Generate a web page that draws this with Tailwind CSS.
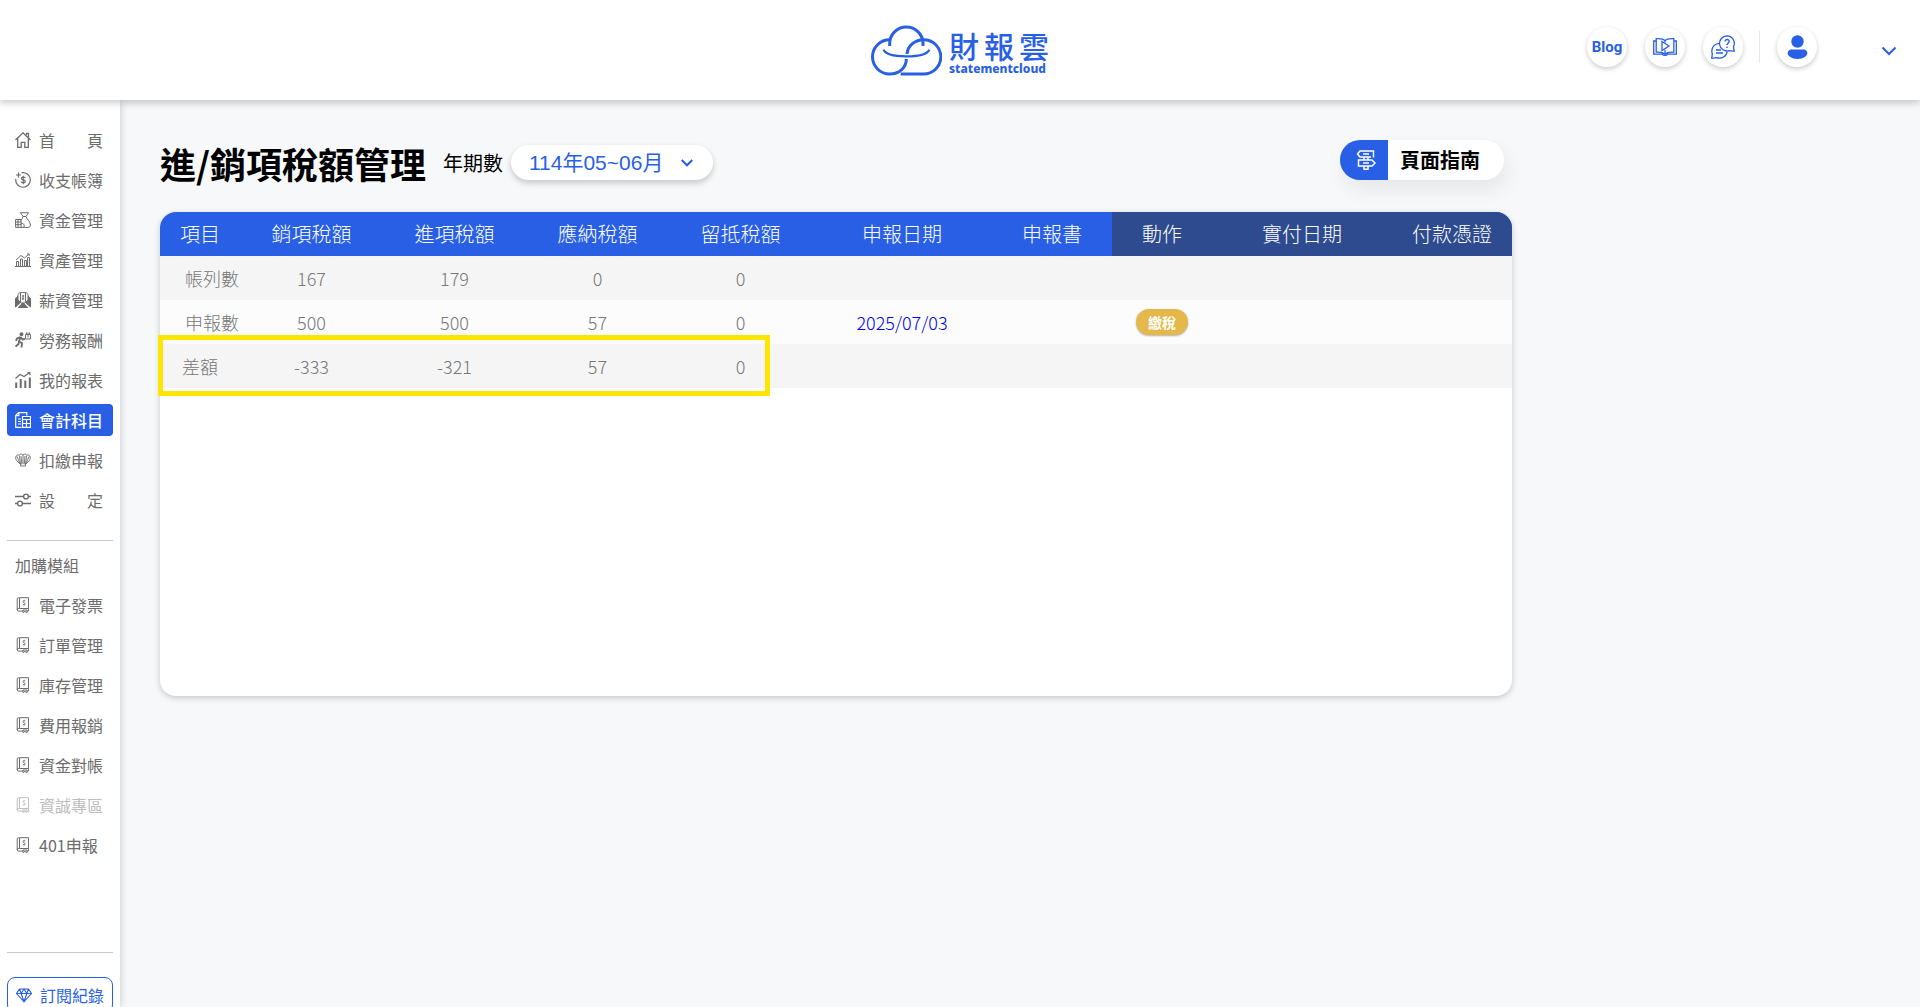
<!DOCTYPE html>
<html lang="zh-Hant">
<head>
    <meta charset="UTF-8">
    <meta name="viewport" content="width=device-width, initial-scale=1.0">
    <title>財報雲 - 進/銷項稅額管理</title>
    <script src="https://cdn.jsdelivr.net/npm/@tailwindcss/browser@4"></script>
</head>
<body class="h-screen overflow-hidden flex flex-col bg-[#f7f8fa] text-black font-['Noto_Sans_CJK_TC',sans-serif]">
    <!-- Icons used more than once -->
    <svg class="hidden">
        <symbol id="icon-book" viewBox="0 0 16 16" fill="none" stroke="currentColor">
            <path d="M4.500 .7h9v10.800h-9zM4.500 .7h-1a1.300 1.300 0 0 0-1.300 1.300v10.800a1.300 1.300 0 0 1 1.300-1.300h1M2.200 12.800a1.300 1.300 0 0 0 1.300 1.300h4.500M13.500 11.500v2.600h-1.500M8 13h4v2.500l-2-1-2 1z" />
            <path d="M10.200 4.200c-.5-.6-2.300-.6-2.300.5 0 1.200 2.400.8 2.400 2.100 0 1.100-1.900 1.100-2.500.4M9 3v1M9 7.600v1" stroke-width=".9" />
        </symbol>
    </svg>

    <!-- Header -->
    <header class="relative z-20 h-25 shrink-0 bg-white shadow-[0_2px_8px_rgba(0,0,0,0.25)] grid grid-cols-[1fr_auto_1fr] items-center">
        <div></div>
        <a href="#" class="flex items-center gap-[7px] text-[#285fe5]">
            <svg class="w-[71px] h-[51px]" viewBox="66 73 213 153" fill="none" stroke="currentColor" stroke-width="9">
                <path d="M122 136v-7a50 50 0 0 1 100 0v7" />
                <path d="M122 117a51 51 0 1 0 0 103c28 0 50-18 50-45" />
                <path d="M174 160c2-26 25-43 50-43a51 51 0 0 1 0 103h-69" />
                <path d="M104 147c5 15 35 20 68 20s62-5 69-20" stroke-width="7" />
            </svg>
            <span class="flex flex-col w-[100px] pt-[6px]">
                <span class="flex justify-between text-[30px] leading-8 font-medium"><span>財</span><span>報</span><span>雲</span></span>
                <span class="font-['Noto_Sans'] font-extrabold text-xs leading-4">statementcloud</span>
            </span>
        </a>
        <div class="flex items-center justify-end pr-[23px] pb-[6px] text-[#285fe5]">
            <a href="#" class="size-10 rounded-full bg-white shadow-[0_2px_5px_rgba(0,0,0,0.2)] flex items-center justify-center font-[Roboto] font-bold text-[15px]">Blog</a>
            <a href="#" aria-label="教學影片" class="ml-[18px] size-10 rounded-full bg-white shadow-[0_2px_5px_rgba(0,0,0,0.2)] flex items-center justify-center">
                <svg class="size-6" viewBox="0 0 24 24" fill="none" stroke="currentColor" stroke-width="1.300">
                    <path d="M12 5.500C10 3.700 7 3.300 3.200 3.700v13.500c3.800-.3 6.800.1 8.800 1.800 2-1.700 5-2.100 8.800-1.800V3.700C17 3.300 14 3.700 12 5.500zM3 6H.7v13.200h8.800c.5 1.500 4.500 1.500 5 0h8.800V6H21" />
                    <path d="M12 5.500v2M12 15v4" />
                    <path d="M9 6.500l7 4.500-7 4.500z" fill="white" />
                </svg>
            </a>
            <a href="#" aria-label="常見問題" class="ml-[18px] size-10 rounded-full bg-white shadow-[0_2px_5px_rgba(0,0,0,0.2)] flex items-center justify-center">
                <svg class="size-6" viewBox="0 0 24 24" fill="none" stroke="currentColor" stroke-width="1.300">
                    <path d="M8.500 8.300C4 8.500.8 11.800.8 16c0 1 .2 1.800.5 2.600L.8 23.300l5-.6c5 1.800 10-1.700 10.200-6" />
                    <path d="M16 .8a7.600 7.600 0 1 0 2.200 14.900l5 .6-.7-4.500A7.600 7.600 0 0 0 16 .8z" fill="white" />
                    <path d="M14 6.500c0-2.800 4.300-2.600 4.200 0 0 1.600-2.200 1.600-2.200 3.500M16 11.500v1.500M5 15h5M5 18h7" stroke-width="1.400" />
                </svg>
            </a>
            <span class="ml-4 w-px h-8 bg-gray-200"></span>
            <button type="button" aria-label="使用者" class="ml-[17px] size-10 rounded-full bg-white shadow-[0_2px_5px_rgba(0,0,0,0.2)] flex items-center justify-center">
                <svg class="size-6" viewBox="0 0 24 24" fill="currentColor">
                    <circle cx="12.500" cy="6.500" r="6.200" />
                    <path d="M5.500 14.500h14c6 2.500 2 9.500-7 9.500S-.5 17 5.500 14.500z" />
                </svg>
            </button>
            <button type="button" aria-label="展開選單" class="ml-16 mt-2">
                <svg class="size-4" viewBox="0 0 16 16" fill="none" stroke="currentColor" stroke-width="2"><path d="M1.500 4.500L8 11l6.500-6.500" /></svg>
            </button>
        </div>
    </header>

    <div class="flex flex-1 min-h-0">
        <!-- Sidebar -->
        <nav class="relative z-10 w-30 shrink-0 overflow-hidden bg-white shadow-[0_0_8px_rgba(0,0,0,0.2)] px-[7px] pt-6 text-base text-[#6c6c6c]">
            <ul class="flex flex-col gap-2">
                <li><a href="#" class="flex items-center h-8 px-2 gap-2">
                    <svg class="size-4 shrink-0" viewBox="0 0 16 16" fill="none" stroke="currentColor" stroke-width="1.300"><path d="M.5 8L8 .9 15.500 8M2.700 6.500v8.900h3.500v-5h3.600v5h3.500V6.500M11.500 3V1.300h2v4" /></svg>
                    <span class="flex flex-1 justify-between pr-[2px]"><span>首</span><span>頁</span></span></a></li>
                <li><a href="#" class="flex items-center h-8 px-2 gap-2">
                    <svg class="size-4 shrink-0" viewBox="0 0 16 16" fill="none" stroke="currentColor" stroke-width="1.200"><path d="M6.500 .8a7.300 7.300 0 1 1-5.700 6M3.500 .5v5M1 3h5M10.300 6c-.8-1.200-4-1.200-4 .6 0 1.700 4 1 4 2.800 0 1.900-3.400 1.800-4.300.4M8.200 3.700v8.600" /></svg>
                    <span class="whitespace-nowrap">收支帳簿</span></a></li>
                <li><a href="#" class="flex items-center h-8 px-2 gap-2">
                    <svg class="size-4 shrink-0" viewBox="0 0 16 16" fill="none" stroke="currentColor"><path d="M8 4.500L5.500 .7h8L11 4.500zM8 4.500C7.500 7 6 8 5.500 8.500M11 4.500c.5 2.500 4.400 4.500 4.400 8.500 0 1.500-.9 2.400-2.400 2.400H.6V7.500h5.500v8M.6 10h5.500M.6 12.700h5.500M3 7.500v8M6 11.500c3-1 4 2.500 2.500 4" /></svg>
                    <span class="whitespace-nowrap">資金管理</span></a></li>
                <li><a href="#" class="flex items-center h-8 px-2 gap-2">
                    <svg class="size-4 shrink-0" viewBox="0 0 16 16" fill="none" stroke="currentColor"><path d="M0 14.500h16M1.500 14V9.500h2V14M5.500 14V7h2v7M9.500 14V8.500h2V14M12.500 14V5.500h2V14M1 8l5-4.500L9.500 6 14 2M12 2h2.200v2" /></svg>
                    <span class="whitespace-nowrap">資產管理</span></a></li>
                <li><a href="#" class="flex items-center h-8 px-2 gap-2">
                    <svg class="size-4 shrink-0" viewBox="0 0 16 16" fill="currentColor"><path d="M0 6.500L3 3.500v4.500L6.500 10 .7 15.500 0 15zM16 6.500L13 3.500v4.500L9.500 10l5.800 5.500.7-.5zM7 11h2l4.500 5h-11z" /><path d="M3 8V3.500C3 2 4 .6 5.500 .6h5C12 .6 13 2 13 3.500V8l-3 3H6zM5.500 .6v9M10.500 .6v9M8 3v5M6.800 4h2.400M6.800 6.800h2.400" fill="none" stroke="currentColor" /></svg>
                    <span class="whitespace-nowrap">薪資管理</span></a></li>
                <li><a href="#" class="flex items-center h-8 px-2 gap-2">
                    <svg class="size-4 shrink-0" viewBox="0 0 16 16" fill="none" stroke="currentColor" stroke-width="1.300"><circle cx="6.500" cy="2.200" r="1.300" fill="currentColor" /><path d="M5.500 5L4 9.500l3 1.500-.5 4.500M4 9.500L3.500 12 .5 14.500M5.500 5L2 6.500 1 9M5.500 5L7.500 7.500 10 7" stroke-width="1.900" /><path d="M10.500 2.500h5v4.500h-5zM11.500 2.500V.5M14.500 2.500V.5M13 .5v5" stroke-width="1" /></svg>
                    <span class="whitespace-nowrap">勞務報酬</span></a></li>
                <li><a href="#" class="flex items-center h-8 px-2 gap-2">
                    <svg class="size-4 shrink-0" viewBox="0 0 16 16" fill="none" stroke="currentColor" stroke-width="1.200"><path d="M.5 6.500L5 2.500l4 2L14.500 .8M12.500 .7h2.400V3" /><path d="M1.200 16v-5.500M5.700 16V7M10.300 16V8.500M14.800 16V5.500" stroke-width="2" /></svg>
                    <span class="whitespace-nowrap">我的報表</span></a></li>
                <li><a href="#" aria-current="page" class="flex items-center h-8 px-2 gap-2 rounded bg-[#285fe5] text-white font-medium">
                    <svg class="size-4 shrink-0" viewBox="0 0 16 16" fill="none" stroke="currentColor" stroke-width="1.200"><path d="M6.500 15.300H.7V3.500L3.500 .7h8.300V3.500M3.800 .7v3H.7M3 7h3M3 9.500h3M3 12h3" /><path d="M7.500 4.500h8v10.800h-8zM7.500 7.500h8M11.500 7.500v7.800M7.500 11.500h8" /></svg>
                    <span class="whitespace-nowrap">會計科目</span></a></li>
                <li><a href="#" class="flex items-center h-8 px-2 gap-2">
                    <svg class="size-4 shrink-0" viewBox="0 0 16 16" fill="none" stroke="currentColor" stroke-width=".9"><path d="M8 3c-1.500-1.500-3-1-3.500 0C2.500 2.500 1 3.500 .8 5c-.5 1.500.5 3 1.200 4l3.500 3.500v1.500h5v-1.500L14 9c.7-1 1.700-2.500 1.200-4-.2-1.500-1.700-2.500-3.700-2-.500-1-2-1.500-3.500 0zM8 3v9M6 4l.8 8.500M10 4l-.8 8.500M4.300 3.500l1.300 9M11.700 3.500l-1.300 9M2 4.500l3 7M14 4.500l-3 7" /></svg>
                    <span class="whitespace-nowrap">扣繳申報</span></a></li>
                <li><a href="#" class="flex items-center h-8 px-2 gap-2">
                    <svg class="size-4 shrink-0" viewBox="0 0 16 16" fill="none" stroke="currentColor" stroke-width="1.400"><path d="M0 4.500h8.500M13.500 4.500H16M0 11.500h2.500M7.500 11.500H16" /><circle cx="11" cy="4.500" r="2.400" /><circle cx="5" cy="11.500" r="2.400" /></svg>
                    <span class="flex flex-1 justify-between pr-[2px]"><span>設</span><span>定</span></span></a></li>
            </ul>
            <hr class="mt-6 mb-2 border-[#c9c9c9]">
            <h2 class="h-8 px-2 leading-8">加購模組</h2>
            <ul class="mt-2 flex flex-col gap-2">
                <li><a href="#" class="flex items-center h-8 px-2 gap-2"><svg class="size-4 shrink-0"><use href="#icon-book" /></svg><span class="whitespace-nowrap">電子發票</span></a></li>
                <li><a href="#" class="flex items-center h-8 px-2 gap-2"><svg class="size-4 shrink-0"><use href="#icon-book" /></svg><span class="whitespace-nowrap">訂單管理</span></a></li>
                <li><a href="#" class="flex items-center h-8 px-2 gap-2"><svg class="size-4 shrink-0"><use href="#icon-book" /></svg><span class="whitespace-nowrap">庫存管理</span></a></li>
                <li><a href="#" class="flex items-center h-8 px-2 gap-2"><svg class="size-4 shrink-0"><use href="#icon-book" /></svg><span class="whitespace-nowrap">費用報銷</span></a></li>
                <li><a href="#" class="flex items-center h-8 px-2 gap-2"><svg class="size-4 shrink-0"><use href="#icon-book" /></svg><span class="whitespace-nowrap">資金對帳</span></a></li>
                <li><a href="#" class="flex items-center h-8 px-2 gap-2 text-[#bdbdbd]"><svg class="size-4 shrink-0"><use href="#icon-book" /></svg><span class="whitespace-nowrap">資誠專區</span></a></li>
                <li><a href="#" class="flex items-center h-8 px-2 gap-2"><svg class="size-4 shrink-0"><use href="#icon-book" /></svg><span class="whitespace-nowrap">401申報</span></a></li>
            </ul>
            <hr class="mt-[91px] mb-6 border-[#c9c9c9]">
            <a href="#" class="flex items-center h-9 px-2 gap-2 rounded-lg border border-[#285fe5] text-[#285fe5]">
                <svg class="size-4 shrink-0" viewBox="0 0 16 16" fill="none" stroke="currentColor" stroke-width="1.100"><path d="M3.500 2h9L15.500 6.500 8 14.800.5 6.500zM.5 6.500h15M3.500 2l1.700 4.500L8 14.800l2.800-8.300L12.500 2M5.200 6.500L8 2l2.800 4.500" /></svg>
                <span class="whitespace-nowrap">訂閱紀錄</span>
            </a>
        </nav>

        <!-- Main content -->
        <main class="flex-1 min-w-0 px-10 pt-10">
            <div class="max-w-[1352px]">
                <div class="flex items-start justify-between pr-2 h-12">
                    <div class="flex items-center h-[45px]">
                        <h1 class="text-4xl font-bold">進/銷項稅額管理</h1>
                        <label for="period" class="ml-[17px] text-xl">年期數</label>
                        <div class="relative ml-2">
                            <select id="period" class="block appearance-none h-[35px] w-[202px] rounded-full bg-white pl-[18px] pr-10 text-[21px] text-[#285fe5] font-['Liberation_Sans','Noto_Sans_CJK_TC',sans-serif] shadow-[0_3px_6px_rgba(0,0,0,0.2)]">
                                <option>114年05~06月</option>
                            </select>
                            <svg class="absolute right-5 top-3 size-3 text-[#285fe5] pointer-events-none" viewBox="0 0 12 12" fill="none" stroke="currentColor" stroke-width="2"><path d="M.7 3L6 8.300 11.300 3" /></svg>
                        </div>
                    </div>
                    <button type="button" class="flex h-10 rounded-full overflow-hidden bg-white text-xl font-bold shadow-[4px_10px_20px_rgba(0,0,0,0.07)]">
                        <span class="w-12 h-10 bg-[#285fe5] text-white flex items-center justify-center pl-1">
                            <svg class="size-5" viewBox="0 0 20 20" fill="none" stroke="currentColor" stroke-width="1.500"><path d="M15 7H4L1.500 4 4 1h13.500v6.500M8 7v3h4V7M2.500 10h13.500l3 3-3 3H2.500zM8 16v3.300h4V16M7 4h6M7 13h6" /></svg>
                        </span>
                        <span class="pl-3 pr-6 leading-10">頁面指南</span>
                    </button>
                </div>

                <div class="relative mt-6">
                    <div class="min-h-[484px] rounded-2xl overflow-hidden bg-white shadow-[0_2px_6px_rgba(0,0,0,0.2)]">
                        <table class="w-full table-fixed text-center text-lg font-light text-[#777]">
                            <colgroup>
                                <col class="w-20"><col><col><col><col>
                                <col class="w-45"><col class="w-30"><col class="w-25"><col class="w-45"><col class="w-30">
                            </colgroup>
                            <thead class="text-xl text-white">
                                <tr class="h-11 bg-[#285fe5]">
                                    <th class="font-light">項目</th>
                                    <th class="font-light">銷項稅額</th>
                                    <th class="font-light">進項稅額</th>
                                    <th class="font-light">應納稅額</th>
                                    <th class="font-light">留抵稅額</th>
                                    <th class="font-light">申報日期</th>
                                    <th class="font-light">申報書</th>
                                    <th class="font-light bg-[#2d4b8e]">動作</th>
                                    <th class="font-light bg-[#2d4b8e]">實付日期</th>
                                    <th class="font-light bg-[#2d4b8e]">付款憑證</th>
                                </tr>
                            </thead>
                            <tbody>
                                <tr class="h-11 bg-[#f5f5f5]">
                                    <td class="pl-6 whitespace-nowrap">帳列數</td>
                                    <td>167</td><td>179</td><td>0</td><td>0</td>
                                    <td></td><td></td><td></td><td></td><td></td>
                                </tr>
                                <tr class="h-11 bg-[#fcfcfc]">
                                    <td class="pl-6 whitespace-nowrap">申報數</td>
                                    <td>500</td><td>500</td><td>57</td><td>0</td>
                                    <td><a href="#" class="text-[#0000ee]">2025/07/03</a></td>
                                    <td></td>
                                    <td><button type="button" class="block mx-auto h-[26px] px-3 rounded-full bg-[#e4b84a] text-white text-sm font-bold shadow-[0_1px_2px_rgba(0,0,0,0.3)]">繳稅</button></td>
                                    <td></td><td></td>
                                </tr>
                                <tr class="h-11 bg-[#f5f5f5]">
                                    <td>差額</td>
                                    <td>-333</td><td>-321</td><td>57</td><td>0</td>
                                    <td></td><td></td><td></td><td></td><td></td>
                                </tr>
                            </tbody>
                        </table>
                    </div>
                    <!-- Highlight around the difference row -->
                    <div class="absolute -left-[2px] top-[123px] w-[612px] h-[61px] border-5 border-[#ffe600] pointer-events-none"></div>
                </div>
            </div>
        </main>
    </div>
</body>
</html>
